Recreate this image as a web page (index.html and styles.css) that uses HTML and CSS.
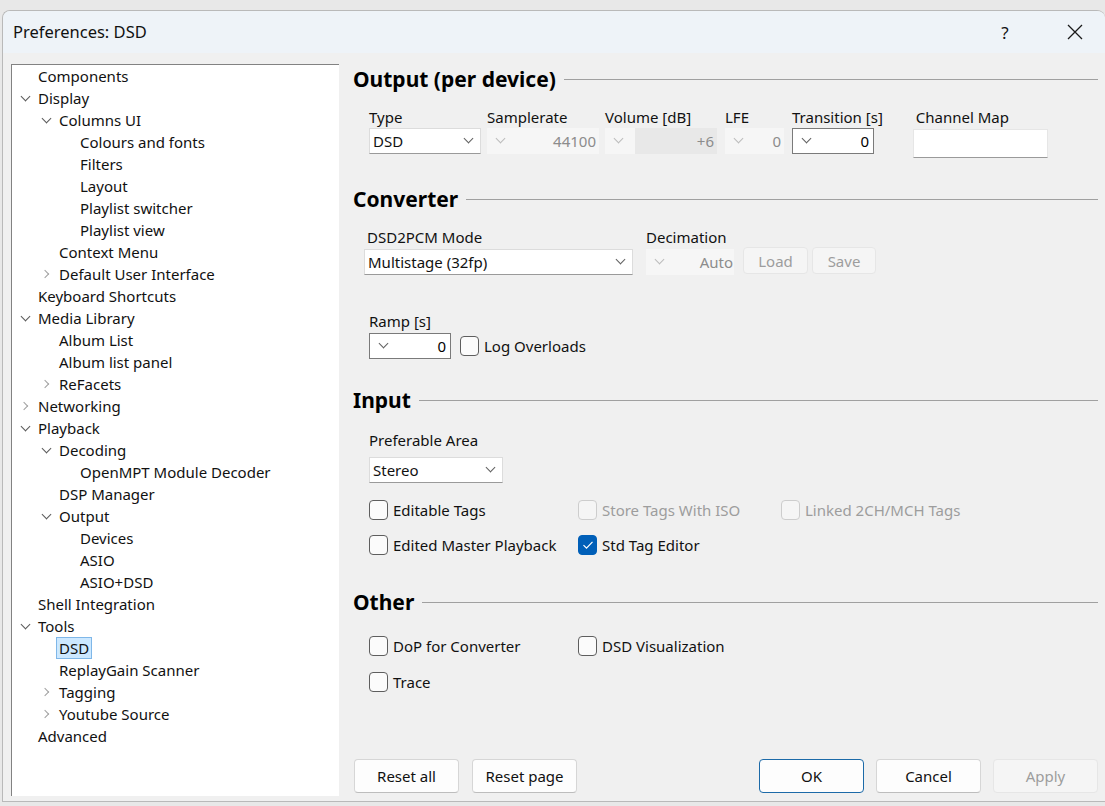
FILE: index.html
```html
<!DOCTYPE html>
<html>
<head>
<meta charset="utf-8">
<link rel="stylesheet" href="styles.css">
</head>
<body>
<div class="window">
  <div class="titlebar">
    <div class="title">Preferences: DSD</div>
    <div class="tb-btn help">?</div>
    <div class="tb-btn close"><svg width="16" height="16" viewBox="0 0 16 16"><path d="M1 1L15 15M15 1L1 15" stroke="#1a1a1a" stroke-width="1.3" fill="none"/></svg></div>
  </div>
  <div class="content">
    <div class="tree">
      <div class="row l0"><span class="chev"></span><span class="lbl">Components</span></div>
      <div class="row l0"><span class="chev down"></span><span class="lbl">Display</span></div>
      <div class="row l1"><span class="chev down"></span><span class="lbl">Columns UI</span></div>
      <div class="row l2"><span class="chev"></span><span class="lbl">Colours and fonts</span></div>
      <div class="row l2"><span class="chev"></span><span class="lbl">Filters</span></div>
      <div class="row l2"><span class="chev"></span><span class="lbl">Layout</span></div>
      <div class="row l2"><span class="chev"></span><span class="lbl">Playlist switcher</span></div>
      <div class="row l2"><span class="chev"></span><span class="lbl">Playlist view</span></div>
      <div class="row l1"><span class="chev"></span><span class="lbl">Context Menu</span></div>
      <div class="row l1"><span class="chev right"></span><span class="lbl">Default User Interface</span></div>
      <div class="row l0"><span class="chev"></span><span class="lbl">Keyboard Shortcuts</span></div>
      <div class="row l0"><span class="chev down"></span><span class="lbl">Media Library</span></div>
      <div class="row l1"><span class="chev"></span><span class="lbl">Album List</span></div>
      <div class="row l1"><span class="chev"></span><span class="lbl">Album list panel</span></div>
      <div class="row l1"><span class="chev right"></span><span class="lbl">ReFacets</span></div>
      <div class="row l0"><span class="chev right"></span><span class="lbl">Networking</span></div>
      <div class="row l0"><span class="chev down"></span><span class="lbl">Playback</span></div>
      <div class="row l1"><span class="chev down"></span><span class="lbl">Decoding</span></div>
      <div class="row l2"><span class="chev"></span><span class="lbl">OpenMPT Module Decoder</span></div>
      <div class="row l1"><span class="chev"></span><span class="lbl">DSP Manager</span></div>
      <div class="row l1"><span class="chev down"></span><span class="lbl">Output</span></div>
      <div class="row l2"><span class="chev"></span><span class="lbl">Devices</span></div>
      <div class="row l2"><span class="chev"></span><span class="lbl">ASIO</span></div>
      <div class="row l2"><span class="chev"></span><span class="lbl">ASIO+DSD</span></div>
      <div class="row l0"><span class="chev"></span><span class="lbl">Shell Integration</span></div>
      <div class="row l0"><span class="chev down"></span><span class="lbl">Tools</span></div>
      <div class="row l1"><span class="chev"></span><span class="lbl selected">DSD</span></div>
      <div class="row l1"><span class="chev"></span><span class="lbl">ReplayGain Scanner</span></div>
      <div class="row l1"><span class="chev right"></span><span class="lbl">Tagging</span></div>
      <div class="row l1"><span class="chev right"></span><span class="lbl">Youtube Source</span></div>
      <div class="row l0"><span class="chev"></span><span class="lbl">Advanced</span></div>
    </div>

    <div class="pane">
      <div class="heading">Output (per device)</div>
      <div class="fields out-row">
        <div class="field">
          <div class="label">Type</div>
          <div class="combo w-type"><span>DSD</span><i class="dd"></i></div>
        </div>
        <div class="field">
          <div class="label">Samplerate</div>
          <div class="spin disabled w-type"><i class="dd"></i><span>44100</span></div>
        </div>
        <div class="field">
          <div class="label">Volume [dB]</div>
          <div class="spin disabled w-type vol"><i class="dd"></i><span class="inner">+6</span></div>
        </div>
        <div class="field f-lfe">
          <div class="label">LFE</div>
          <div class="spin disabled w-lfe"><i class="dd"></i><span>0</span></div>
        </div>
        <div class="field f-trans">
          <div class="label">Transition [s]</div>
          <div class="spin edit w-trans"><i class="dd"></i><span>0</span></div>
        </div>
        <div class="field f-map">
          <div class="label pad3">Channel Map</div>
          <div class="editbox w-map"></div>
        </div>
      </div>

      <div class="heading h-conv">Converter</div>
      <div class="fields conv-row">
        <div class="field">
          <div class="label pad3">DSD2PCM Mode</div>
          <div class="combo w-mode"><span>Multistage (32fp)</span><i class="dd"></i></div>
        </div>
        <div class="field f-dec">
          <div class="label">Decimation</div>
          <div class="spin disabled w-dec"><i class="dd"></i><span>Auto</span></div>
        </div>
        <div class="btn disabled small w-load">Load</div>
        <div class="btn disabled small w-save">Save</div>
      </div>
      <div class="fields ramp-row">
        <div class="field">
          <div class="label">Ramp [s]</div>
          <div class="ramp-line">
            <div class="spin edit w-trans ramp"><i class="dd"></i><span>0</span></div>
            <label class="check"><i class="box"></i><span>Log Overloads</span></label>
          </div>
        </div>
      </div>

      <div class="heading h-input">Input</div>
      <div class="fields in-block">
        <div class="label">Preferable Area</div>
        <div class="combo w-area"><span>Stereo</span><i class="dd"></i></div>
        <div class="checks">
          <label class="check"><i class="box"></i><span>Editable Tags</span></label>
          <label class="check disabled"><i class="box"></i><span>Store Tags With ISO</span></label>
          <label class="check disabled"><i class="box"></i><span>Linked 2CH/MCH Tags</span></label>
          <label class="check"><i class="box"></i><span>Edited Master Playback</span></label>
          <label class="check checked"><i class="box"><svg width="12" height="10" viewBox="0 0 12 10"><path d="M1.5 5.2L4.5 8.2L10.5 1.8" stroke="#fff" stroke-width="1.2" fill="none"/></svg></i><span>Std Tag Editor</span></label>
        </div>
      </div>

      <div class="heading h-other">Other</div>
      <div class="fields">
        <div class="checks other">
          <label class="check"><i class="box"></i><span>DoP for Converter</span></label>
          <label class="check"><i class="box"></i><span>DSD Visualization</span></label>
          <label class="check"><i class="box"></i><span>Trace</span></label>
        </div>
      </div>

      <div class="buttons">
        <div class="btn">Reset all</div>
        <div class="btn">Reset page</div>
        <div class="spacer"></div>
        <div class="btn default">OK</div>
        <div class="btn">Cancel</div>
        <div class="btn disabled">Apply</div>
      </div>
    </div>
  </div>
</div>
</body>
</html>
```

FILE: styles.css
```css
* { box-sizing: border-box; }
html, body { margin: 0; padding: 0; }
body {
  background: #e8e8e8;
  font-family: "Noto Sans", "Open Sans", sans-serif;
  font-size: 15px;
  color: #111;
  width: 1105px;
  height: 806px;
  overflow: hidden;
  padding-top: 10px;
  padding-left: 2px;
}
.window {
  width: 1103px;
  height: 792px;
  background: #f0f0f0;
  border: 1px solid #b9b9b9;
  border-right: none;
  border-radius: 8px 8px 0 0;
  display: flex;
  flex-direction: column;
  overflow: hidden;
}
.titlebar {
  height: 42px;
  background: #eef3f8;
  display: flex;
  align-items: center;
  flex-shrink: 0;
}
.title {
  flex: 1;
  padding-left: 10px;
  font-size: 16.5px;
  padding-bottom: 2px;
}
.tb-btn {
  width: 70px;
  height: 42px;
  display: flex;
  align-items: center;
  justify-content: center;
  font-size: 17px;
}
.tb-btn.close { width: 70px; margin-right: -5px; }

.content {
  flex: 1;
  display: flex;
  min-height: 0;
}
.tree {
  width: 328px;
  margin: 11px 0 5px 8px;
  background: #fff;
  border-top: 1px solid #828282;
  border-left: 1px solid #828282;
  flex-shrink: 0;
}
.row {
  height: 22px;
  display: flex;
  align-items: center;
  white-space: nowrap;
}
.row.l0 { padding-left: 8px; }
.row.l1 { padding-left: 29px; }
.row.l2 { padding-left: 50px; }
.chev {
  width: 18px;
  height: 22px;
  flex-shrink: 0;
  position: relative;
}
.chev.down::before {
  content: "";
  position: absolute;
  left: 2px;
  top: 6px;
  width: 6px;
  height: 6px;
  border-right: 1.2px solid #5a5a5a;
  border-bottom: 1.2px solid #5a5a5a;
  transform: rotate(45deg);
}
.chev.right::before {
  content: "";
  position: absolute;
  left: 1px;
  top: 8px;
  width: 5px;
  height: 5px;
  border-right: 1.2px solid #a0a0a0;
  border-bottom: 1.2px solid #a0a0a0;
  transform: rotate(-45deg);
}
.lbl.selected {
  background: #cce8ff;
  border: 1px solid #7fb7e8;
  padding: 0 2px;
  margin-left: -3px;
  line-height: 20px;
}

.pane {
  flex: 1;
  display: flex;
  flex-direction: column;
  padding: 14px 7px 8px 14px;
}
.heading {
  display: flex;
  align-items: center;
  font-weight: bold;
  font-size: 21px;
  line-height: 24px;
  height: 24px;
  color: #000;
  white-space: nowrap;
}
.heading::after {
  content: "";
  flex: 1;
  height: 1px;
  background: #a0a0a0;
  margin-left: 8px;
  margin-top: 1px;
}
.fields { padding-left: 16px; }
.field { display: flex; flex-direction: column; }
.label { line-height: 20px; height: 20px; white-space: nowrap; }
.label.pad3 { padding-left: 3px; }

.out-row { display: flex; margin-top: 16px; gap: 6px; }
.out-row .label { margin-bottom: 1px; }
.f-lfe { margin-left: 2px; }
.f-trans { margin-left: 2px; }
.f-map { margin-left: 24px; }
.w-type { width: 112px; }
.w-lfe { width: 59px; }
.w-trans { width: 82px; }
.w-map { width: 135px; }

.combo, .spin {
  height: 26px;
  display: flex;
  align-items: center;
  white-space: nowrap;
}
.combo {
  background: #fff;
  border: 1px solid #dcdcdc;
  border-bottom-color: #9a9a9a;
  padding: 0 8px 0 3px;
  justify-content: space-between;
}
.dd {
  width: 7px;
  height: 7px;
  border-right: 1.1px solid #606060;
  border-bottom: 1.1px solid #606060;
  transform: rotate(45deg);
  margin-top: -5px;
  flex-shrink: 0;
}
.spin {
  padding: 0 3px 0 10px;
  justify-content: space-between;
}
.spin.disabled {
  background: #f6f6f6;
  color: #8c8c8c;
}
.spin.disabled .dd { border-color: #bcbcbc; }
.spin.vol { padding-right: 0; }
.spin.vol .inner {
  background: #e8e8e8;
  width: 82px;
  height: 100%;
  display: flex;
  align-items: center;
  justify-content: flex-end;
  padding-right: 3px;
}
.spin.edit {
  background: #fff;
  border: 1px solid #7a7a7a;
  padding-right: 4px;
  color: #000;
}
.editbox {
  height: 29px;
  margin-top: 1px;
  background: #fff;
  border: 1px solid #e6e6e6;
  border-bottom-color: #9a9a9a;
}

.h-conv { margin-top: 29px; }
.conv-row { display: flex; align-items: flex-end; margin-top: 16px; padding-left: 11px; }
.conv-row .label { margin-bottom: 2px; }
.w-mode { width: 269px; height: 26px; }
.f-dec { margin-left: 13px; }
.w-dec { width: 88px; padding-right: 1px; }
.btn {
  height: 34px;
  width: 105px;
  display: flex;
  align-items: center;
  justify-content: center;
  background: #fdfdfd;
  border: 1px solid #d6d6d6;
  border-bottom-color: #bdbdbd;
  border-radius: 4px;
  color: #111;
}
.btn.small { height: 27px; margin-bottom: 1px; }
.w-load { width: 65px; margin-left: 9px; }
.w-save { width: 64px; margin-left: 4px; }
.btn.disabled {
  background: #f5f5f5;
  border-color: #e6e6e6;
  color: #9d9d9d;
}
.btn.default {
  border-color: #1c6aa8;
}

.ramp-row { margin-top: 36px; }
.ramp-row .label { margin-bottom: 2px; }
.ramp-line { display: flex; align-items: center; gap: 9px; }
.ramp { height: 26px; }

.check {
  display: flex;
  align-items: center;
  gap: 5px;
  white-space: nowrap;
  height: 22px;
}
.box {
  width: 19px;
  height: 20px;
  border: 1px solid #5e5e5e;
  border-radius: 4px;
  background: #fbfbfb;
  display: flex;
  align-items: center;
  justify-content: center;
  flex-shrink: 0;
}
.check.disabled { color: #9d9d9d; }
.check.disabled .box { border-color: #cdcdcd; background: #f5f5f5; }
.check.checked .box { background: #005fb8; border-color: #005fb8; }

.h-input { margin-top: 29px; }
.in-block { margin-top: 18px; }
.in-block .label { margin-bottom: 7px; }
.w-area { width: 134px; }
.checks {
  display: grid;
  grid-template-columns: 209px 203px auto;
  row-gap: 13px;
  margin-top: 16px;
}
.checks.other {
  grid-template-columns: 209px auto;
  row-gap: 14px;
  margin-top: 21px;
}
.h-other { margin-top: 34px; }

.buttons {
  margin-top: auto;
  display: flex;
  gap: 12px;
  padding-left: 1px;
}
.buttons .btn:nth-child(2) { margin-left: 1px; }
.spacer { flex: 1; }
```
